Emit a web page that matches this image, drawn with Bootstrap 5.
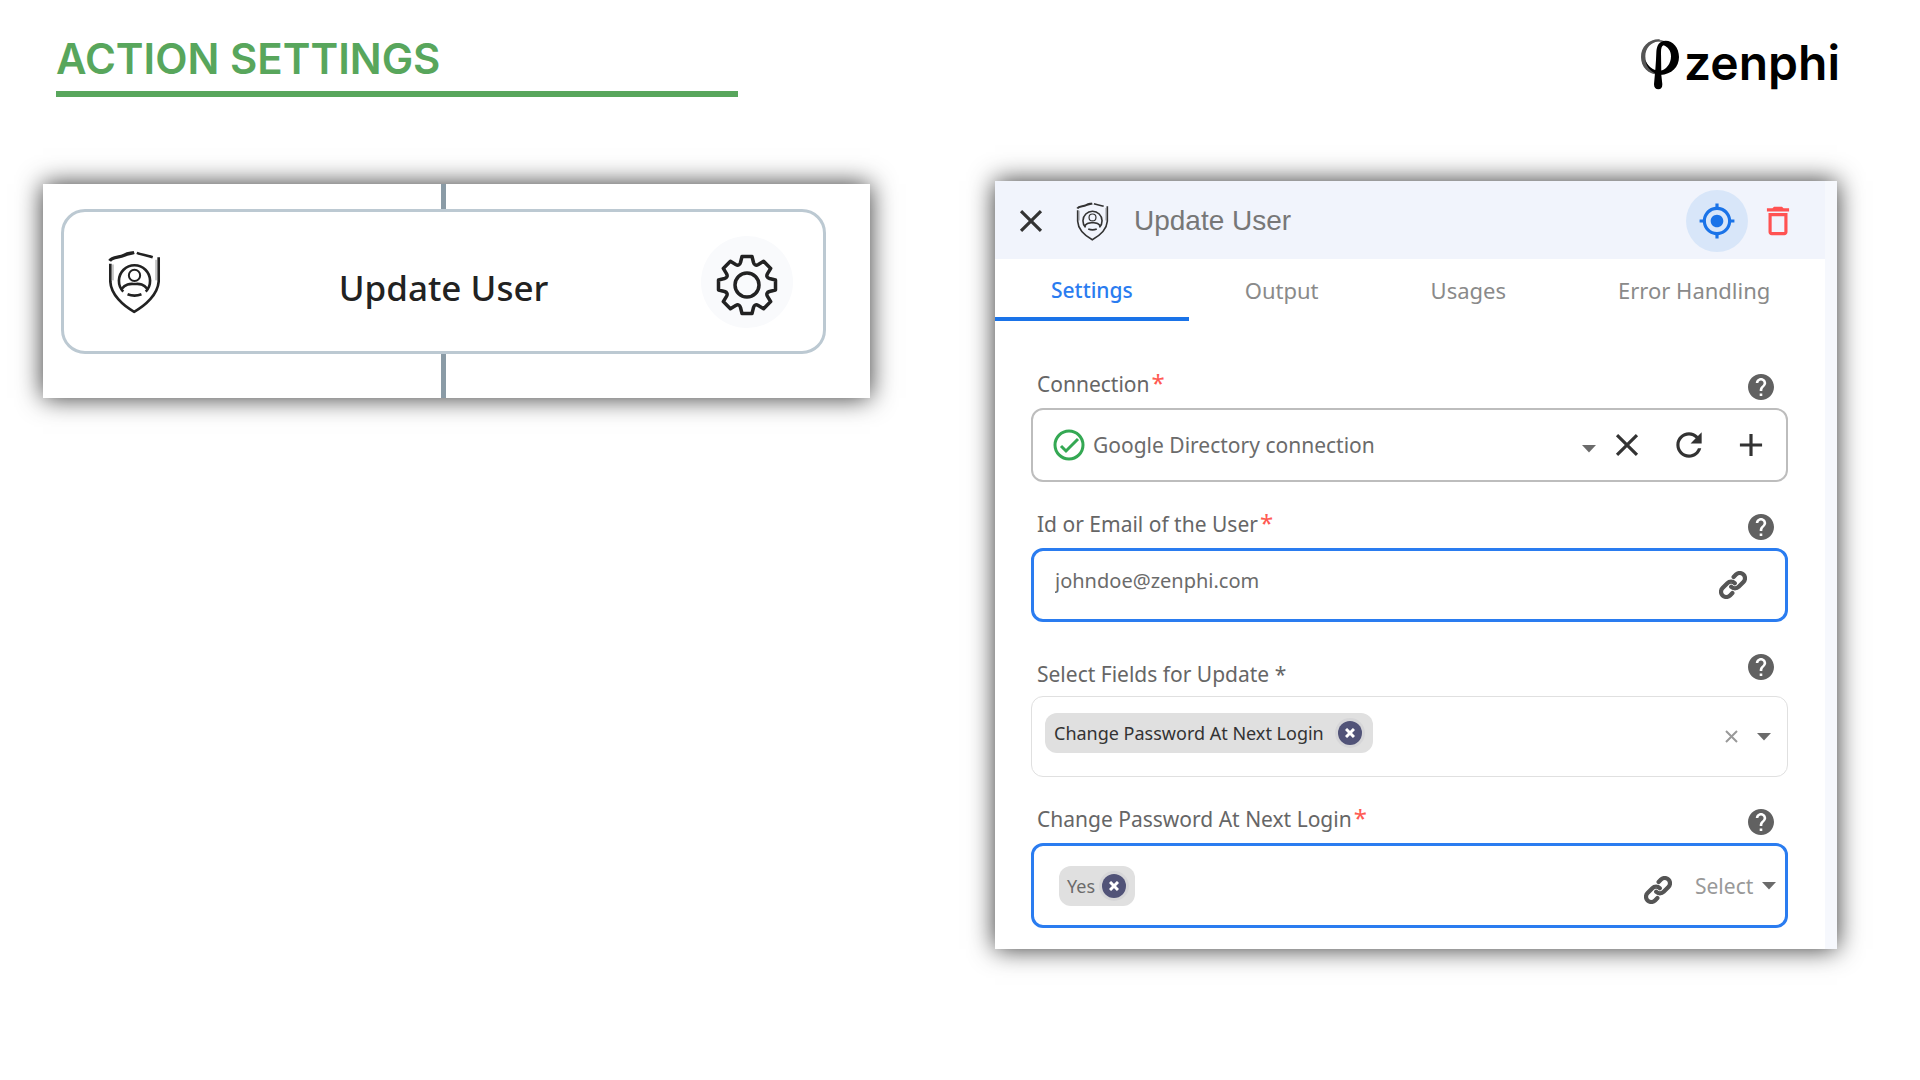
<!DOCTYPE html>
<html lang="en">
<head>
<meta charset="utf-8">
<meta name="viewport" content="width=device-width, initial-scale=1">
<title>Action Settings – zenphi</title>
<link href="https://cdn.jsdelivr.net/npm/bootstrap@5.3.0/dist/css/bootstrap.min.css" rel="stylesheet">
<style>
  body { font-family: "Noto Sans", sans-serif; background: #fff; }
  svg { display: block; flex: none; fill: currentColor; }
  button { border: 0; background: none; padding: 0; color: inherit; }

  .page-head { padding: 35px 80px 0 56px; }
  .page-title { font: 600 42px/48px Inter, sans-serif; color: #58a65c; width: 682px; padding-bottom: 8px; border-bottom: 6px solid #58a65c; }
  .brand { color: #000; gap: 5px; padding-top: 4px; }
  .brand-name { font: 600 48px/48px Inter, sans-serif; }

  .shots { display: grid; grid-template-columns: minmax(0, 827fr) minmax(0, 842fr); gap: 125px; padding: 84px 83px 40px 43px; align-items: start; }
  .shot { background: #fff; box-shadow: 0 0 24px rgba(0, 0, 0, .8); }

  .flow { margin-top: 3px; padding: 0 44px 0 18px; }
  .wire { width: 5px; background: #8a9ba6; height: 25px; }
  .wire-end { height: 44px; }
  .node { width: 100%; height: 145px; border: 3px solid #bcc9d2; border-radius: 24px; padding: 0 30px; display: grid; grid-template-columns: 1fr auto 1fr; align-items: center; color: #222; }
  .node-icon { margin-left: 14px; }
  .node-name { font-size: 35px; line-height: 48px; font-weight: 500; padding-top: 12px; }
  .node-gear { width: 92px; height: 92px; background: #f9fafc; padding-top: 6px; justify-self: end; }

  .panel { border-right: 12px solid #f6f8fd; }
  .panel-head { height: 78px; background: #f1f4fc; padding: 2px 28px 0 17px; color: #333; }
  .panel-title { font: 400 28px/36px "Liberation Sans", sans-serif; color: #777; margin: 0 0 0 25px; }
  .panel-icon { margin-left: 26px; }
  .locate { width: 62px; height: 62px; background: #d8e6f9; color: #1a73e8; margin-right: 11px; }
  .trash { color: #ff5252; }

  .tabs .nav-link { border: 0; border-bottom: 4px solid transparent; border-radius: 0; padding: 16px 56px 12px; font-size: 22px; line-height: 30px; color: #8a8a8a; }
  .tabs .nav-link.active { color: #2a7cf0; border-color: #1a73e8; font-weight: 500; font-size: 21px; }

  .settings { padding: 49px 37px 21px 36px; display: grid; gap: 28px; color: #666; font-size: 21px; line-height: 28px; }
  .cap-row { display: flex; justify-content: space-between; height: 38px; padding: 0 14px 0 6px; }
  .cap-row.tall { height: 46px; }
  .tall label { padding-top: 10px; }
  .req { color: #ff5a52; margin-left: 2px; font-size: 24px; line-height: 24px; }
  .help { color: #616161; height: 26px; margin-top: 4px; }

  .field { display: flex; align-items: center; height: 74px; border: 2px solid #bdbdbd; border-radius: 12px; color: #6b6b6b; }
  .field.on { border: 3px solid #2a7cf0; }
  .field.tags { height: 81px; border: 1px solid #e0e0e0; }
  .field.big { height: 85px; }
  .field input, .field select { appearance: none; border: 0; outline: 0; background: none; padding: 0; color: inherit; min-width: 0; flex: 1; }
  .tool { width: 38px; color: #333; }
  .drop { margin: 8px 12px 0 0; }

  .tag { background: #e0e0e0; border-radius: 12px; height: 40px; display: flex; align-items: center; font-size: 18px; }
  .tag button { width: 24px; height: 24px; border-radius: 50%; background: #515378; color: #fff; box-shadow: 0 0 0 3px #d6d6d8; display: flex; align-items: center; justify-content: center; }

  .user-field { padding: 0 38px 0 21px; font-size: 20px; }
  .user-field input { margin-bottom: 8px; }
  .user-field button { color: #555; }
  .tags { padding: 0 16px 0 13px; }
  .tags .tag { color: #333; padding: 0 11px 0 9px; gap: 14px; margin-bottom: 8px; }
  .tags > button + button { margin-left: 19px; }
  .big { padding: 0 9px 0 25px; }
  .big .tag { padding: 0 9px 0 8px; gap: 7px; }
  .big > button { color: #555; margin-top: 8px; }
  .field.big select { flex: none; width: 62px; margin: 0 5px 0 23px; color: #999; }
</style>
<script src="https://cdn.jsdelivr.net/npm/bootstrap@5.3.0/dist/js/bootstrap.bundle.min.js"></script>
</head>
<body>

<svg width="0" height="0" class="position-absolute" aria-hidden="true">
  <symbol id="i-close" viewBox="0 0 24 24"><path d="M19 6.41L17.59 5 12 10.59 6.41 5 5 6.41 10.59 12 5 17.59 6.41 19 12 13.41 17.59 19 19 17.59 13.41 12z"/></symbol>
  <symbol id="i-add" viewBox="0 0 24 24"><path d="M19 13h-6v6h-2v-6H5v-2h6V5h2v6h6v2z"/></symbol>
  <symbol id="i-refresh" viewBox="0 0 24 24"><path d="M17.65 6.35C16.2 4.9 14.21 4 12 4c-4.42 0-7.99 3.58-7.99 8s3.57 8 7.99 8c3.73 0 6.84-2.55 7.73-6h-2.08c-.82 2.33-3.04 4-5.65 4-3.31 0-6-2.69-6-6s2.69-6 6-6c1.66 0 3.14.69 4.22 1.78L13 11h7V4l-2.35 2.35z"/></symbol>
  <symbol id="i-help" viewBox="2 2 20 20"><path d="M12 2C6.48 2 2 6.48 2 12s4.48 10 10 10 10-4.48 10-10S17.52 2 12 2zm1 17h-2v-2h2v2zm2.07-7.75l-.9.92C13.45 12.9 13 13.5 13 15h-2v-.5c0-1.1.45-2.1 1.17-2.83l1.24-1.26c.37-.36.59-.86.59-1.41 0-1.1-.9-2-2-2s-2 .9-2 2H8c0-2.21 1.79-4 4-4s4 1.79 4 4c0 .88-.36 1.68-.93 2.25z"/></symbol>
  <symbol id="i-caret" viewBox="0 0 14 8"><path d="M0 0h14L7 7.500z"/></symbol>
  <symbol id="i-link" viewBox="0.700 0.700 14.600 14.600"><path stroke="currentColor" stroke-width=".7" d="M7.775 3.275a.75.75 0 001.06 1.060l1.250-1.250a2 2 0 112.830 2.830l-2.500 2.500a2 2 0 01-2.830 0 .75.75 0 00-1.060 1.060 3.500 3.500 0 004.950 0l2.500-2.500a3.500 3.500 0 00-4.950-4.950l-1.250 1.250zm-4.690 9.640a2 2 0 010-2.830l2.500-2.500a2 2 0 012.830 0 .75.75 0 001.060-1.060 3.500 3.500 0 00-4.950 0l-2.500 2.500a3.500 3.500 0 004.950 4.950l1.250-1.250a.75.75 0 00-1.060-1.060l-1.250 1.250a2 2 0 01-2.830 0z"/></symbol>
  <symbol id="i-shield" viewBox="263 271 160 192">
    <g fill="none" stroke="currentColor" stroke-width="8">
      <path d="M270 312V366C272 405 308 438 342 457C376 438 413 405 416 366V292"/>
      <path d="M268 303C276 290 296 294 312 286C324 280 332 281 342 278" stroke-width="10"/>
      <path d="M350 279C362 284 380 286 398 292"/>
      <path d="M278 314V362M408 300V362" stroke-width="3" opacity=".5"/>
      <path d="M309 396A47 47 0 1 1 377 396M322 404Q343 412 364 404"/>
      <circle cx="343" cy="347" r="17" stroke-width="6"/>
      <path d="M304 388C318 370 332 373 343 373C356 373 368 370 382 388"/>
    </g>
  </symbol>
</svg>

<header class="page-head d-flex justify-content-between align-items-start">
  <h1 class="page-title mb-0">ACTION SETTINGS</h1>
  <div class="brand d-flex align-items-start">
    <svg width="38" height="51" viewBox="126 56 114 153" aria-hidden="true">
      <ellipse cx="177" cy="110" rx="46" ry="49" fill="none" stroke="#777" stroke-width="6"/>
      <path d="M182 57C148 56 126 80 126 110C126 140 148 164 182 163L182 155C156 152 139 134 139 108C139 84 155 65 182 61Z" fill="#555"/>
      <path d="M139 120C143 142 158 160 184 164C218 162 240 140 240 110C240 82 222 61 200 61C180 61 173 76 172 96C171 130 168 160 165 192C165 202 170 207 178 207C186 207 190 202 190 192L187 164L186 96C186 84 188 77 194 75C207 80 216 92 216 108C216 130 202 150 180 152C160 150 147 138 139 120Z"/>
    </svg>
    <span class="brand-name">zenphi</span>
  </div>
</header>

<main class="shots">
  <section class="shot flow d-flex flex-column align-items-center" aria-label="Workflow step">
    <div class="wire"></div>
    <div class="node">
      <svg class="node-icon" width="53" height="64"><use href="#i-shield"/></svg>
      <span class="node-name">Update User</span>
      <button class="node-gear rounded-circle d-flex align-items-center justify-content-center" type="button" aria-label="Step settings">
        <svg width="62" height="62" viewBox="-31 -31 62 62">
          <g fill="none" stroke="currentColor" stroke-width="3.500" stroke-linejoin="round">
            <path d="M-5-28.500H5L6.500-22.500Q7.700-18.500 11.300-20.500L16.600-23.700L23.700-16.600L20.500-11.300Q18.500-7.700 22.500-6.500L28.500-5V5L22.500 6.500Q18.500 7.700 20.500 11.300L23.700 16.600L16.600 23.700L11.300 20.500Q7.700 18.500 6.500 22.500L5 28.500H-5L-6.500 22.500Q-7.700 18.500-11.300 20.500L-16.600 23.700L-23.700 16.600L-20.500 11.300Q-18.500 7.700-22.500 6.500L-28.500 5V-5L-22.500-6.500Q-18.500-7.700-20.500-11.300L-23.700-16.600L-16.600-23.700L-11.300-20.500Q-7.700-18.500-6.500-22.500Z"/>
            <circle r="12"/>
          </g>
        </svg>
      </button>
    </div>
    <div class="wire wire-end"></div>
  </section>

  <section class="shot panel" aria-label="Update User settings">
    <div class="panel-head d-flex align-items-center">
      <button type="button" aria-label="Close"><svg width="38" height="38"><use href="#i-close"/></svg></button>
      <svg class="panel-icon" width="33" height="39"><use href="#i-shield"/></svg>
      <h2 class="panel-title me-auto">Update User</h2>
      <button class="locate rounded-circle d-flex align-items-center justify-content-center" type="button" aria-label="Locate step">
        <svg width="38" height="38" viewBox="0 0 24 24"><path d="M12 8c-2.210 0-4 1.790-4 4s1.790 4 4 4 4-1.790 4-4-1.790-4-4-4zm8.940 3c-.46-4.170-3.770-7.480-7.940-7.940V1h-2v2.060C6.830 3.520 3.520 6.830 3.060 11H1v2h2.060c.46 4.170 3.770 7.480 7.940 7.940V23h2v-2.060c4.170-.46 7.480-3.770 7.940-7.940H23v-2h-2.060zM12 19c-3.870 0-7-3.130-7-7s3.130-7 7-7 7 3.130 7 7-3.130 7-7 7z"/></svg>
      </button>
      <button class="trash" type="button" aria-label="Delete step">
        <svg width="38" height="38" viewBox="0 0 24 24"><path d="M6 19c0 1.100.9 2 2 2h8c1.100 0 2-.9 2-2V7H6v12zM8 9h8v10H8V9zm7.500-5l-1-1h-5l-1 1H5v2h14V4h-3.500z"/></svg>
      </button>
    </div>

    <nav class="nav tabs flex-nowrap">
      <a class="nav-link active" aria-current="page" href="#settings">Settings</a>
      <a class="nav-link" href="#output">Output</a>
      <a class="nav-link" href="#usages">Usages</a>
      <a class="nav-link text-nowrap pe-0" href="#errors">Error Handling</a>
    </nav>

    <form class="settings" id="settings">
      <div>
        <div class="cap-row">
          <label for="connection">Connection<span class="req">*</span></label>
          <button class="help" type="button" aria-label="Help"><svg width="26" height="26"><use href="#i-help"/></svg></button>
        </div>
        <div class="field ps-3 pe-3">
          <svg class="ms-1" width="32" height="32" viewBox="0 0 32 32"><g fill="none" stroke="#34a853" stroke-width="3"><circle cx="16" cy="16" r="14"/><path d="M8 17l5 5L25 10"/></g></svg>
          <select id="connection" class="ms-2"><option>Google Directory connection</option></select>
          <svg class="drop" width="14" height="8"><use href="#i-caret"/></svg>
          <div class="d-flex gap-4">
            <button class="tool" type="button" aria-label="Clear connection"><svg width="38" height="38"><use href="#i-close"/></svg></button>
            <button class="tool" type="button" aria-label="Refresh connections"><svg width="38" height="38"><use href="#i-refresh"/></svg></button>
            <button class="tool" type="button" aria-label="Add connection"><svg width="38" height="38"><use href="#i-add"/></svg></button>
          </div>
        </div>
      </div>

      <div>
        <div class="cap-row">
          <label for="user">Id or Email of the User<span class="req">*</span></label>
          <button class="help" type="button" aria-label="Help"><svg width="26" height="26"><use href="#i-help"/></svg></button>
        </div>
        <div class="field on user-field">
          <input id="user" type="text" value="johndoe@zenphi.com">
          <button type="button" aria-label="Insert reference"><svg width="28" height="28"><use href="#i-link"/></svg></button>
        </div>
      </div>

      <div>
        <div class="cap-row tall">
          <label for="fields">Select Fields for Update *</label>
          <button class="help" type="button" aria-label="Help"><svg width="26" height="26"><use href="#i-help"/></svg></button>
        </div>
        <div class="field tags">
          <span class="tag">Change Password At Next Login
            <button type="button" aria-label="Remove field"><svg width="10" height="10" viewBox="0 0 10 10"><path d="M1 1l8 8M9 1l-8 8" stroke="currentColor" stroke-width="3"/></svg></button>
          </span>
          <button class="ms-auto" type="button" aria-label="Clear fields"><svg width="13" height="13" viewBox="0 0 13 13"><path d="M1 1l11 11M12 1L1 12" stroke="#999" stroke-width="2"/></svg></button>
          <button id="fields" type="button" aria-label="Open field list"><svg width="14" height="8"><use href="#i-caret"/></svg></button>
        </div>
      </div>

      <div>
        <div class="cap-row">
          <label for="change">Change Password At Next Login<span class="req">*</span></label>
          <button class="help" type="button" aria-label="Help"><svg width="26" height="26"><use href="#i-help"/></svg></button>
        </div>
        <div class="field on big">
          <span class="tag">Yes
            <button type="button" aria-label="Remove value"><svg width="10" height="10" viewBox="0 0 10 10"><path d="M1 1l8 8M9 1l-8 8" stroke="currentColor" stroke-width="3"/></svg></button>
          </span>
          <button class="ms-auto" type="button" aria-label="Insert reference"><svg width="28" height="28"><use href="#i-link"/></svg></button>
          <select id="change"><option>Select</option></select>
          <svg width="14" height="8"><use href="#i-caret"/></svg>
        </div>
      </div>
    </form>
  </section>
</main>
</body>
</html>
